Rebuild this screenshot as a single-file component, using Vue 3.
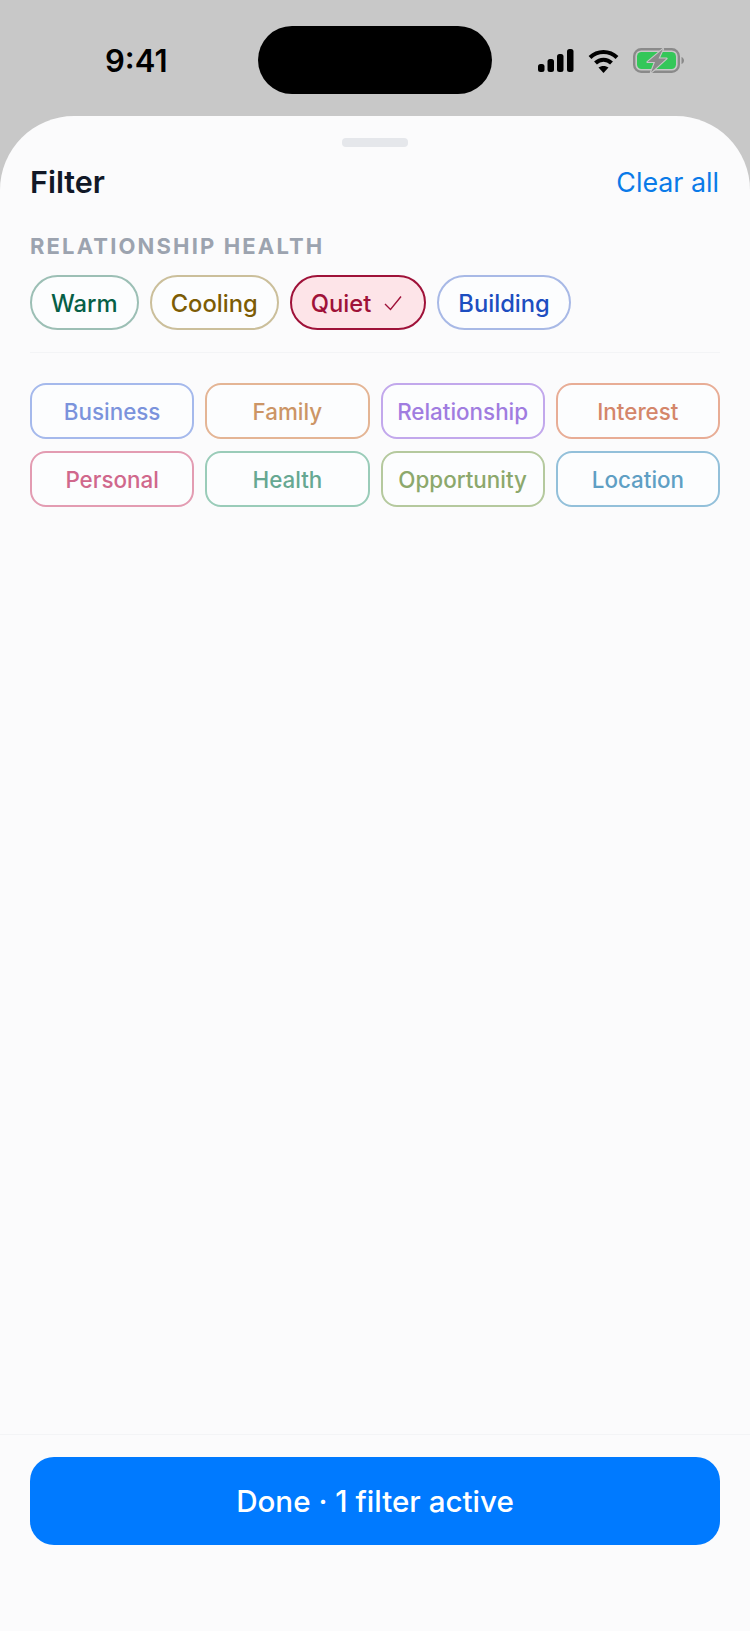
<script setup>
const pills = [
  { label: 'Warm', cls: 'warm' },
  { label: 'Cooling', cls: 'cooling' },
  { label: 'Quiet', cls: 'quiet', on: true },
  { label: 'Building', cls: 'building' },
]
const tags = [
  { label: 'Business', cls: 't-business' },
  { label: 'Family', cls: 't-family' },
  { label: 'Relationship', cls: 't-relationship' },
  { label: 'Interest', cls: 't-interest' },
  { label: 'Personal', cls: 't-personal' },
  { label: 'Health', cls: 't-health' },
  { label: 'Opportunity', cls: 't-opportunity' },
  { label: 'Location', cls: 't-location' },
]
</script>

<template>
  <div class="screen">
    <header class="status">
      <span class="time">9:41</span>
      <div class="island"></div>
      <div class="icons">
        <svg class="signal" width="36" height="23" viewBox="0 0 36 23" fill="#000">
          <rect x="0" y="15" width="6.5" height="8" rx="2.5" />
          <rect x="9.5" y="10" width="6.5" height="13" rx="2.5" />
          <rect x="19" y="5" width="6.5" height="18" rx="2.5" />
          <rect x="29" y="0" width="6.5" height="23" rx="2.5" />
        </svg>
        <svg class="wifi" width="31" height="24" viewBox="0 0 31 24" fill="none" stroke="#000" stroke-width="4">
          <path d="M2 8.5 C9.5 1 21.5 1 29 8.5" />
          <path d="M7.5 14 C12 9.5 19 9.5 23.5 14" />
          <path d="M15.5 24 L10.5 18.6 C13 16.4 18 16.4 20.5 18.6 Z" fill="#000" stroke="none" />
        </svg>
        <svg class="battery" width="51" height="25" viewBox="0 0 51 25" fill="none">
          <rect x="1.2" y="1.2" width="44.6" height="22.6" rx="7" stroke="#8a8a8a" stroke-width="2.4" />
          <rect x="4" y="4" width="39" height="17" rx="4.5" fill="#34c759" />
          <path d="M48.5 9 C50 9.5 51 11 51 12.5 C51 14 50 15.5 48.5 16 Z" fill="#8a8a8a" />
          <path d="M30 1 L14.5 14 H22 L18 24.5 L33.5 10.5 H25.5 Z" fill="#8a8a8a" stroke="#c8c8c8" stroke-width="2.2" stroke-linejoin="round" paint-order="stroke" />
        </svg>
      </div>
    </header>

    <main class="sheet">
      <div class="handle"></div>
      <div class="head">
        <h1 class="title">Filter</h1>
        <span class="clear">Clear all</span>
      </div>
      <div class="section-label">RELATIONSHIP HEALTH</div>
      <div class="pills">
        <div v-for="p in pills" :key="p.label" class="pill" :class="p.cls">
          <span>{{ p.label }}</span>
          <svg v-if="p.on" class="check" width="18" height="16" viewBox="0 0 18 16" fill="none" stroke="currentColor" stroke-width="1.4">
            <path d="M1 9 L6.5 14.5 L17 1.5" />
          </svg>
        </div>
      </div>
      <div class="divider"></div>
      <div class="tags">
        <div v-for="t in tags" :key="t.label" class="tag" :class="t.cls">{{ t.label }}</div>
      </div>
      <div class="spacer"></div>
      <footer class="foot">
        <button class="done">Done · 1 filter active</button>
      </footer>
    </main>
  </div>
</template>

<style>
html, body { margin: 0; padding: 0; background: #c8c8c8; }
</style>

<style scoped>
.screen {
  width: 750px;
  height: 1631px;
  display: flex;
  flex-direction: column;
  background: #c8c8c8;
  font-family: Inter, "Liberation Sans", sans-serif;
  overflow: hidden;
}
.status {
  height: 116px;
  flex: none;
  display: flex;
  align-items: flex-start;
  box-sizing: border-box;
  padding: 26px 66px 0 0;
}
.time {
  width: 258px;
  flex: none;
  box-sizing: border-box;
  padding: 17px 0 0 105px;
  font-size: 31px;
  line-height: 36px;
  font-weight: 600;
  color: #000;
}
.island {
  width: 234px;
  height: 68px;
  flex: none;
  background: #000;
  border-radius: 34px;
}
.icons {
  margin-left: auto;
  padding-top: 22px;
  display: flex;
  align-items: flex-start;
  gap: 14px;
}
.signal { margin-top: 1px; }
.wifi { margin-top: 1px; }
.sheet {
  flex: 1;
  display: flex;
  flex-direction: column;
  min-height: 0;
  background: #fbfbfc;
  border-radius: 74px 74px 0 0;
}
.handle {
  width: 66px;
  height: 9px;
  margin: 22px auto 0;
  border-radius: 4px;
  background: #e5e7eb;
}
.head {
  display: flex;
  justify-content: space-between;
  align-items: center;
  padding: 0 30px;
  margin-top: 17px;
  height: 36px;
}
.title {
  margin: 0;
  font-size: 30.5px;
  line-height: 36px;
  font-weight: 600;
  color: #111827;
}
.clear {
  font-size: 26.8px;
  line-height: 36px;
  color: #0a7ae8;
  margin-right: 1px;
}
.section-label {
  margin: 33px 30px 0;
  font-size: 22px;
  line-height: 26px;
  font-weight: 700;
  letter-spacing: 2.15px;
  color: #9ca3af;
}
.pills {
  display: flex;
  gap: 11px;
  padding: 0 30px;
  margin-top: 16px;
}
.pill {
  height: 55px;
  box-sizing: border-box;
  padding: 1px 19px 0;
  display: flex;
  align-items: center;
  gap: 13px;
  border-radius: 28px;
  border-width: 2px;
  border-style: solid;
  font-size: 23.75px;
  font-weight: 500;
  background: #fcfdfe;
}
.warm { color: #065f46; border-color: #9cbfb5; }
.cooling { color: #7c5c05; border-color: #cbbf9b; }
.quiet { color: #9f1239; border-color: #9f1239; background: #fde4e8; }
.building { color: #1d4ec0; border-color: #a8b9e6; }
.check { margin: 0 3px 0 0; }
.divider {
  height: 1px;
  margin: 22px 30px 0;
  background: #f3f4f6;
}
.tags {
  display: grid;
  grid-template-columns: repeat(4, 1fr);
  gap: 12px 11px;
  padding: 0 30px;
  margin-top: 30px;
}
.tag {
  height: 56px;
  box-sizing: border-box;
  display: flex;
  align-items: center;
  justify-content: center;
  border-radius: 16px;
  border-width: 2px;
  border-style: solid;
  font-size: 22.4px;
  font-weight: 500;
  background: #fcfdfe;
}
.t-business { color: #7b93dc; border-color: #a5b9ec; }
.t-family { color: #cc9566; border-color: #e4b595; }
.t-relationship { color: #a07ce0; border-color: #c2a8ec; }
.t-interest { color: #d4866a; border-color: #e8ad96; }
.t-personal { color: #d0688c; border-color: #e39cb2; }
.t-health { color: #66a892; border-color: #9accb9; }
.t-opportunity { color: #8ca86c; border-color: #b5c99e; }
.t-location { color: #5f9fc4; border-color: #93c0da; }
.spacer { flex: 1; }
.foot {
  flex: none;
  border-top: 1px solid #f3f4f6;
  padding: 22px 30px 86px;
}
.done {
  display: block;
  width: 100%;
  height: 88px;
  border: 0;
  border-radius: 24px;
  background: #007aff;
  color: #fff;
  font-family: inherit;
  font-size: 29.6px;
  font-weight: 500;
}
</style>
